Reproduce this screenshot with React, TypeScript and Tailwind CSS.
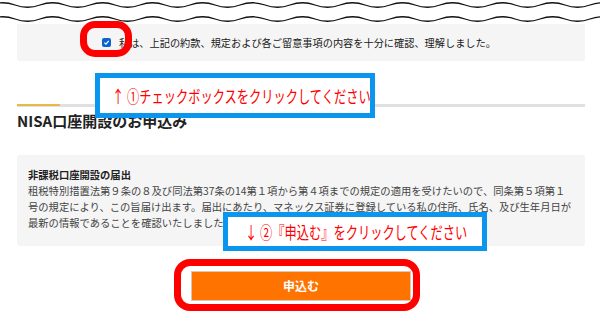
const jp = "font-['Noto_Sans_CJK_JP','Noto_Sans',sans-serif]";

const wavePath = (y: number) => {
  let d = `M-10 ${y}`;
  for (let i = 0; i < 26; i++) {
    const dir = i % 2 === 0 ? -4.5 : 4.5;
    d += ` q12.5 ${dir} 25 0`;
  }
  return d;
};

const Waves = () => (
  <svg width="600" height="24" viewBox="0 0 600 24" className="block">
    <path d={wavePath(5)} fill="none" stroke="#111" strokeWidth="1.3" />
    <path d={wavePath(19)} fill="none" stroke="#111" strokeWidth="1.3" />
  </svg>
);

const CheckBox = () => (
  <span className="w-[9px] h-[9px] rounded-[2px] bg-[#0b63ce] flex items-center justify-center">
    <svg width="7" height="7" viewBox="0 0 10 10">
      <path d="M2 5.2 L4.2 7.4 L8.2 2.6" fill="none" stroke="#fff" strokeWidth="1.8" />
    </svg>
  </span>
);

const App = () => {
  return (
    <div className={`relative w-[600px] h-[312px] overflow-hidden bg-white ${jp}`}>
      <Waves />

      <div className="ml-[17px] w-[568px]">
        <div className="h-[37px] bg-[#f5f5f5] rounded-b-[3px] flex items-center pl-[85px] gap-[8px]">
          <CheckBox />
          <span className="text-[10.2px] text-[#1a1a1a]">
            私は、上記の約款、規定および各ご留意事項の内容を十分に確認、理解しました。
          </span>
        </div>

        <div className="mt-[43px] h-[3px] bg-[#e0e0e0] flex">
          <div className="w-[43px] h-[2px] bg-[#e8b84a]" />
        </div>
        <h2 className="mt-[4px] text-[15px] leading-[20px] font-bold text-[#222]">
          NISA口座開設のお申込み
        </h2>

        <div className="mt-[24px] bg-[#f5f5f5] rounded-[3px] pt-[12px] pb-[15px] pl-[11px] pr-[10px] text-[10.3px] leading-[16px] text-[#444]">
          <p className="font-bold text-[#222]">非課税口座開設の届出</p>
          <p>
            租税特別措置法第９条の８及び同法第37条の14第１項から第４項までの規定の適用を受けたいので、同条第５項第１号の規定により、この旨届け出ます。届出にあたり、マネックス証券に登録している私の住所、氏名、及び生年月日が最新の情報であることを確認いたしました。
          </p>
        </div>

        <div className="mt-[25px] flex justify-center">
          <button className="w-[220px] h-[30px] bg-[#ff7300] border border-[#d9c9bd] text-white text-[12px] font-bold">
            申込む
          </button>
        </div>
      </div>

      {/* annotations */}
      <div className="absolute left-[80px] top-[21px] w-[52px] h-[36px] border-[7px] border-[#ff0000] rounded-[15px]" />

      <div className="absolute left-[95px] top-[73px] w-[280px] h-[45px] border-[5px] border-[#0a96ee] bg-white flex items-center pl-[12px]">
        <span className="inline-block origin-left scale-x-[0.72] whitespace-nowrap text-[17px] text-[#ff0000]">
          ↑ ①チェックボックスをクリックしてください
        </span>
      </div>

      <div className="absolute left-[223px] top-[212px] w-[264px] h-[39px] border-[5px] border-[#0a96ee] bg-white flex items-center pl-[17px]">
        <span className="inline-block origin-left scale-x-[0.72] whitespace-nowrap text-[17px] text-[#ff0000]">
          ↓ ②『申込む』をクリックしてください
        </span>
      </div>

      <div className="absolute left-[174px] top-[259px] w-[246px] h-[52px] border-[7px] border-[#ff0000] rounded-[16px]" />
    </div>
  );
};

export default App;
